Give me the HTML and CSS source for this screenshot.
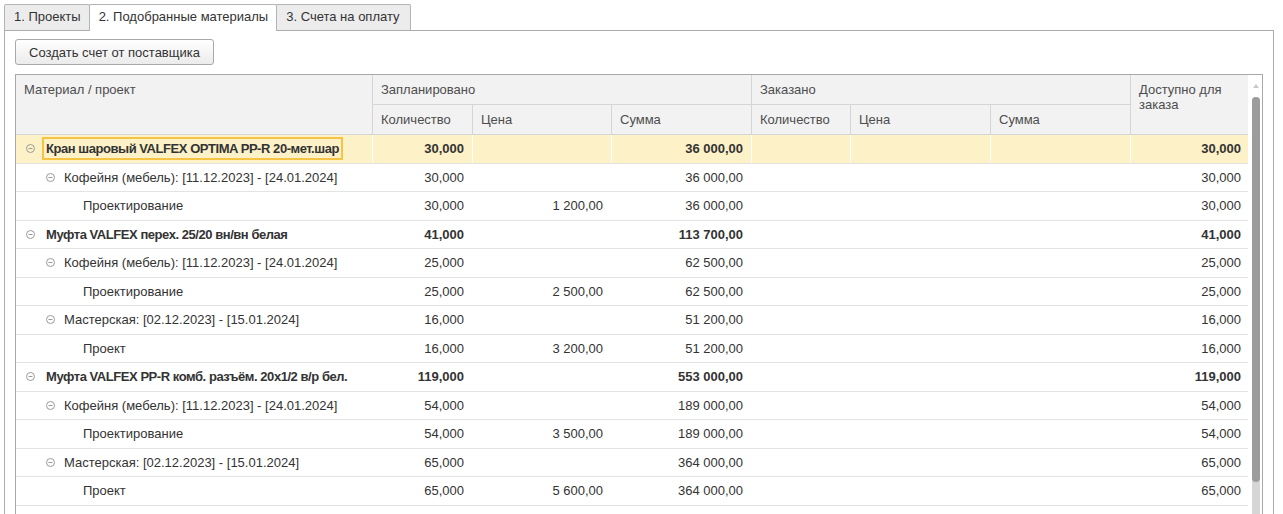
FILE: index.html
```html
<!DOCTYPE html>
<html lang="ru">
<head>
<meta charset="utf-8">
<title>Подобранные материалы</title>
<link rel="stylesheet" href="styles.css">
</head>
<body>
<div class="page">
  <div class="tabs">
    <div class="tab">1. Проекты</div>
    <div class="tab active">2. Подобранные материалы</div>
    <div class="tab">3. Счета на оплату</div>
  </div>
  <div class="panel">
    <button class="btn">Создать счет от поставщика</button>
    <div class="table">
      <div class="grid">
        <div class="head">
          <div class="h h-mat">Материал / проект</div>
          <div class="h h-plan">Запланировано</div>
          <div class="h h-ord">Заказано</div>
          <div class="h h-avail">Доступно для заказа</div>
          <div class="h">Количество</div>
          <div class="h">Цена</div>
          <div class="h">Сумма</div>
          <div class="h">Количество</div>
          <div class="h">Цена</div>
          <div class="h">Сумма</div>
        </div>

        <div class="row lvl0 sel">
          <div class="c name"><svg class="ico" viewBox="0 0 9 9"><circle cx="4.5" cy="4.5" r="4"/><line x1="2.5" y1="4.5" x2="6.5" y2="4.5"/></svg><span class="focus">Кран шаровый VALFEX OPTIMA PP-R 20-мет.шар</span></div>
          <div class="c">30,000</div><div class="c"></div><div class="c">36 000,00</div><div class="c"></div><div class="c"></div><div class="c"></div><div class="c last">30,000</div>
        </div>
        <div class="row lvl1">
          <div class="c name"><svg class="ico" viewBox="0 0 9 9"><circle cx="4.5" cy="4.5" r="4"/><line x1="2.5" y1="4.5" x2="6.5" y2="4.5"/></svg><span>Кофейня (мебель): [11.12.2023] - [24.01.2024]</span></div>
          <div class="c">30,000</div><div class="c"></div><div class="c">36 000,00</div><div class="c"></div><div class="c"></div><div class="c"></div><div class="c last">30,000</div>
        </div>
        <div class="row lvl2">
          <div class="c name"><span>Проектирование</span></div>
          <div class="c">30,000</div><div class="c">1 200,00</div><div class="c">36 000,00</div><div class="c"></div><div class="c"></div><div class="c"></div><div class="c last">30,000</div>
        </div>

        <div class="row lvl0">
          <div class="c name"><svg class="ico" viewBox="0 0 9 9"><circle cx="4.5" cy="4.5" r="4"/><line x1="2.5" y1="4.5" x2="6.5" y2="4.5"/></svg><span>Муфта VALFEX перех. 25/20 вн/вн белая</span></div>
          <div class="c">41,000</div><div class="c"></div><div class="c">113 700,00</div><div class="c"></div><div class="c"></div><div class="c"></div><div class="c last">41,000</div>
        </div>
        <div class="row lvl1">
          <div class="c name"><svg class="ico" viewBox="0 0 9 9"><circle cx="4.5" cy="4.5" r="4"/><line x1="2.5" y1="4.5" x2="6.5" y2="4.5"/></svg><span>Кофейня (мебель): [11.12.2023] - [24.01.2024]</span></div>
          <div class="c">25,000</div><div class="c"></div><div class="c">62 500,00</div><div class="c"></div><div class="c"></div><div class="c"></div><div class="c last">25,000</div>
        </div>
        <div class="row lvl2">
          <div class="c name"><span>Проектирование</span></div>
          <div class="c">25,000</div><div class="c">2 500,00</div><div class="c">62 500,00</div><div class="c"></div><div class="c"></div><div class="c"></div><div class="c last">25,000</div>
        </div>
        <div class="row lvl1">
          <div class="c name"><svg class="ico" viewBox="0 0 9 9"><circle cx="4.5" cy="4.5" r="4"/><line x1="2.5" y1="4.5" x2="6.5" y2="4.5"/></svg><span>Мастерская: [02.12.2023] - [15.01.2024]</span></div>
          <div class="c">16,000</div><div class="c"></div><div class="c">51 200,00</div><div class="c"></div><div class="c"></div><div class="c"></div><div class="c last">16,000</div>
        </div>
        <div class="row lvl2">
          <div class="c name"><span>Проект</span></div>
          <div class="c">16,000</div><div class="c">3 200,00</div><div class="c">51 200,00</div><div class="c"></div><div class="c"></div><div class="c"></div><div class="c last">16,000</div>
        </div>

        <div class="row lvl0">
          <div class="c name"><svg class="ico" viewBox="0 0 9 9"><circle cx="4.5" cy="4.5" r="4"/><line x1="2.5" y1="4.5" x2="6.5" y2="4.5"/></svg><span>Муфта VALFEX PP-R комб. разъём. 20х1/2 в/р бел.</span></div>
          <div class="c">119,000</div><div class="c"></div><div class="c">553 000,00</div><div class="c"></div><div class="c"></div><div class="c"></div><div class="c last">119,000</div>
        </div>
        <div class="row lvl1">
          <div class="c name"><svg class="ico" viewBox="0 0 9 9"><circle cx="4.5" cy="4.5" r="4"/><line x1="2.5" y1="4.5" x2="6.5" y2="4.5"/></svg><span>Кофейня (мебель): [11.12.2023] - [24.01.2024]</span></div>
          <div class="c">54,000</div><div class="c"></div><div class="c">189 000,00</div><div class="c"></div><div class="c"></div><div class="c"></div><div class="c last">54,000</div>
        </div>
        <div class="row lvl2">
          <div class="c name"><span>Проектирование</span></div>
          <div class="c">54,000</div><div class="c">3 500,00</div><div class="c">189 000,00</div><div class="c"></div><div class="c"></div><div class="c"></div><div class="c last">54,000</div>
        </div>
        <div class="row lvl1">
          <div class="c name"><svg class="ico" viewBox="0 0 9 9"><circle cx="4.5" cy="4.5" r="4"/><line x1="2.5" y1="4.5" x2="6.5" y2="4.5"/></svg><span>Мастерская: [02.12.2023] - [15.01.2024]</span></div>
          <div class="c">65,000</div><div class="c"></div><div class="c">364 000,00</div><div class="c"></div><div class="c"></div><div class="c"></div><div class="c last">65,000</div>
        </div>
        <div class="row lvl2">
          <div class="c name"><span>Проект</span></div>
          <div class="c">65,000</div><div class="c">5 600,00</div><div class="c">364 000,00</div><div class="c"></div><div class="c"></div><div class="c"></div><div class="c last">65,000</div>
        </div>

        <div class="row lvl0">
          <div class="c name"><svg class="ico" viewBox="0 0 9 9"><circle cx="4.5" cy="4.5" r="4"/><line x1="2.5" y1="4.5" x2="6.5" y2="4.5"/></svg><span>Муфта VALFEX PP-R 25-1 нар. бел.</span></div>
          <div class="c">155,000</div><div class="c"></div><div class="c">554 000,00</div><div class="c"></div><div class="c"></div><div class="c"></div><div class="c last">155,000</div>
        </div>
      </div>
      <div class="scroll">
        <div class="arrow"></div>
        <div class="track"><div class="thumb"></div></div>
      </div>
    </div>
  </div>
</div>
</body>
</html>
```
FILE: styles.css
```css
html, body {
  margin: 0;
  padding: 0;
  background: #fff;
}
body {
  font-family: "Liberation Sans", Arial, sans-serif;
  font-size: 13px;
  color: #333;
  height: 514px;
  overflow: hidden;
}
.page {
  padding: 4px 0 0 4px;
}

/* Tabs */
.tabs {
  display: flex;
  align-items: flex-start;
  height: 26px;
  position: relative;
  z-index: 1;
}
.tab {
  box-sizing: border-box;
  height: 26px;
  line-height: 24px;
  padding: 0 8px 0 9px;
  border: 1px solid #b4b4b4;
  border-bottom: none;
  border-radius: 2px 2px 0 0;
  background: #ececec;
  margin-right: -1px;
  color: #333;
  white-space: nowrap;
}
.tab:last-child {
  padding-right: 10px;
}
.tab.active {
  background: #fff;
  height: 27px;
}

/* Panel */
.panel {
  box-sizing: border-box;
  width: 1270px;
  height: 620px;
  border: 1px solid #acacac;
  padding: 8px 10px 0 10px;
}
.btn {
  display: block;
  box-sizing: border-box;
  width: 199px;
  height: 26px;
  padding: 0;
  border: 1px solid #a9a9a9;
  border-radius: 3px;
  background: linear-gradient(#ffffff, #ebebeb);
  font-family: "Liberation Sans", Arial, sans-serif;
  font-size: 13px;
  color: #333;
}

/* Table */
.table {
  margin-top: 9px;
  box-sizing: border-box;
  width: 1248px;
  height: 470px;
  border: 1px solid #a8a8a8;
  display: flex;
  overflow: hidden;
}
.grid {
  width: 1232px;
  flex: none;
}
.head,
.row {
  display: grid;
  grid-template-columns: 357px 100px 139px 140px 99px 140px 140px 117px;
}
.head {
  grid-template-rows: 30px 30px;
  background: #f2f2f2;
}
.h {
  box-sizing: border-box;
  border-right: 1px solid #d5d5d5;
  border-bottom: 1px solid #d5d5d5;
  padding: 7px 8px 0 8px;
  line-height: 15px;
  color: #4d4d4d;
}
.h-mat {
  grid-row: 1 / 3;
}
.h-plan {
  grid-column: 2 / 5;
}
.h-ord {
  grid-column: 5 / 8;
}
.h-avail {
  grid-column: 8;
  grid-row: 1 / 3;
  border-right: none;
}

.row {
  box-sizing: border-box;
  height: 28.5px;
  border-bottom: 1px solid #e3e3e3;
}
.row.sel {
  background: #fdf1c7;
}
.c {
  box-sizing: border-box;
  border-right: 1px solid #fff;
  padding: 0 8px;
  text-align: right;
  white-space: nowrap;
  display: flex;
  align-items: center;
  justify-content: flex-end;
}
.c.last {
  border-right: none;
  padding-right: 7px;
}
.c.name {
  justify-content: flex-start;
  text-align: left;
}
.lvl0 {
  font-weight: bold;
}
.lvl0 .name span {
  letter-spacing: -0.45px;
}
.lvl0 .name {
  padding-left: 10px;
}
.lvl0 .ico {
  margin-right: 11px;
}
.lvl1 .name {
  padding-left: 30px;
}
.lvl1 .ico {
  margin-right: 9px;
}
.lvl2 .name {
  padding-left: 67px;
}
.ico {
  width: 9px;
  height: 9px;
  flex: none;
  fill: none;
  stroke: #9a9a9a;
  stroke-width: 1;
}
.focus {
  outline: 2px solid #f5c445;
  outline-offset: 2px;
}

/* Scrollbar */
.scroll {
  width: 14px;
  flex: none;
  display: flex;
  flex-direction: column;
  align-items: center;
  padding-top: 9px;
  padding-left: 1px;
  box-sizing: border-box;
}
.arrow {
  width: 0;
  height: 0;
  border-left: 3px solid transparent;
  border-right: 3px solid transparent;
  border-bottom: 4px solid #c8c8c8;
}
.track {
  margin-top: 9px;
  width: 8px;
  flex: 1;
  background: #d6d6d6;
  border-radius: 4px 4px 0 0;
}
.thumb {
  height: 385px;
  background: #9c9c9c;
  border-radius: 4px;
}
```
